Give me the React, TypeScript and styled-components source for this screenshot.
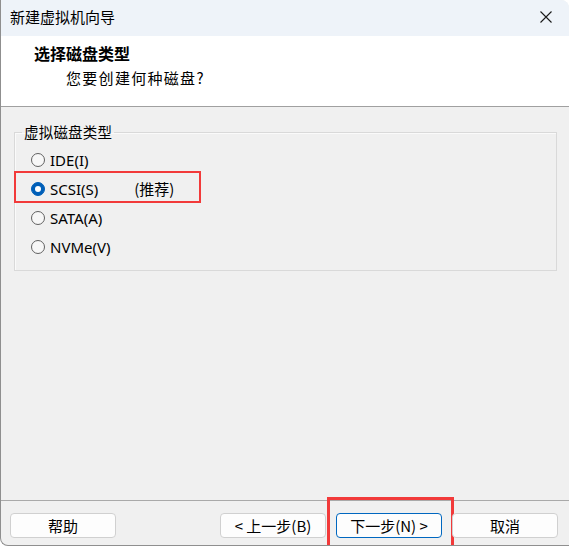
import React, { useState } from "react";
import styled, { createGlobalStyle, css } from "styled-components";

const GlobalStyle = createGlobalStyle`
  html, body {
    margin: 0;
    padding: 0;
    background: #ffffff;
  }
  body {
    font-family: "Noto Sans", "Noto Sans CJK SC", sans-serif;
    color: #000;
    overflow: hidden;
  }
`;

const FONT = `"Noto Sans", "Noto Sans CJK SC", sans-serif`;
const CJK = `"Noto Sans CJK SC", "Noto Sans", sans-serif`;

const Window = styled.div`
  width: 568px;
  height: 545px;
  display: flex;
  flex-direction: column;
  border-left: 1px solid #8f8f8f;
  border-bottom: 1px solid #8f8f8f;
  border-top-right-radius: 8px;
  border-bottom-left-radius: 8px;
  overflow: hidden;
  background: #f0f0f0;
`;

const TitleBar = styled.div`
  height: 36px;
  flex: none;
  display: flex;
  align-items: center;
  justify-content: space-between;
  padding: 0 16px 0 9px;
  background: #eef3f9;
`;

const TitleText = styled.span`
  font-family: ${CJK};
  font-size: 15px;
  line-height: 20px;
  margin-top: -2px;
`;

const CloseButton = styled.button`
  border: none;
  background: transparent;
  padding: 0;
  width: 14px;
  height: 14px;
  display: flex;
  align-items: center;
  justify-content: center;
  margin-top: -2px;
`;

const Header = styled.div`
  height: 71px;
  flex: none;
  background: #ffffff;
  border-bottom: 1px solid #a0a0a0;
  padding: 6px 0 0 33px;
  box-sizing: border-box;
  display: flex;
  flex-direction: column;
`;

const HeaderTitle = styled.div`
  font-family: ${CJK};
  font-weight: 700;
  font-size: 16px;
  line-height: 22px;
`;

const HeaderSub = styled.div`
  font-family: ${CJK};
  font-size: 15px;
  line-height: 22px;
  letter-spacing: 1.3px;
  margin: 3px 0 0 32px;
`;

const Content = styled.div`
  flex: 1;
  padding: 15px 12px 0 13px;
`;

const GroupBox = styled.fieldset`
  margin: 0;
  padding: 3px 0 9px 16px;
  border: 1px solid #d9d9d9;
  box-shadow: inset 1px 1px 0 #fafafa;
  min-width: 0;
`;

const GroupLegend = styled.legend`
  font-family: ${CJK};
  font-size: 14.5px;
  line-height: 20px;
  letter-spacing: 0.2px;
  padding: 0 2px;
  margin-left: -9px;
`;

const OptionRow = styled.label<{ $highlight?: boolean }>`
  position: relative;
  height: 29px;
  display: flex;
  align-items: center;
  gap: 5px;
  font-family: ${FONT};
  font-size: 15px;
  cursor: default;

  ${(p) =>
    p.$highlight &&
    css`
      &::after {
        content: "";
        position: absolute;
        left: -17px;
        top: -3px;
        width: 187px;
        height: 32px;
        box-sizing: border-box;
        border: 2.5px solid #f23a3a;
        pointer-events: none;
      }
    `}
`;

const RadioDot = styled.span<{ $checked?: boolean }>`
  width: 14px;
  height: 14px;
  flex: none;
  box-sizing: border-box;
  border-radius: 50%;
  display: flex;
  align-items: center;
  justify-content: center;
  border: 1px solid ${(p) => (p.$checked ? "#005fb8" : "#616161")};
  background: ${(p) => (p.$checked ? "#005fb8" : "#f7f7f7")};

  &::before {
    content: "";
    width: 6px;
    height: 6px;
    border-radius: 50%;
    background: #ffffff;
    display: ${(p) => (p.$checked ? "block" : "none")};
  }
`;

const OptionText = styled.span`
  line-height: 20px;
`;

const Recommend = styled.span`
  font-family: ${CJK};
  margin-left: 31px;
  line-height: 20px;
`;

const Footer = styled.div`
  height: 45px;
  flex: none;
  border-top: 1px solid #a9a9a9;
  display: flex;
  align-items: flex-start;
  padding: 12px 11px 0 9px;
  box-sizing: border-box;
`;

const ButtonGroup = styled.div`
  margin-left: auto;
  display: flex;
  gap: 10px;
`;

const DialogButton = styled.button<{ $primary?: boolean; $highlight?: boolean }>`
  position: relative;
  width: 106px;
  height: 25px;
  box-sizing: border-box;
  border-radius: 4px;
  border: 1px solid ${(p) => (p.$primary ? "#0067c0" : "#d0d0d0")};
  background: #fdfdfd;
  font-family: ${CJK};
  font-size: 15px;
  line-height: 20px;
  color: #000;
  padding: 0;

  ${(p) =>
    p.$highlight &&
    css`
      &::after {
        content: "";
        position: absolute;
        left: -10px;
        top: -17px;
        right: -13px;
        height: 64px;
        border: 3px solid #f23a3a;
        pointer-events: none;
      }
    `}
`;

const CloseIcon = () => (
  <svg width="12" height="12" viewBox="0 0 12 12">
    <path d="M0.5 0.5 L11.5 11.5 M11.5 0.5 L0.5 11.5" stroke="#1a1a1a" strokeWidth="1.1" />
  </svg>
);

const options = [
  { id: "ide", label: "IDE(I)" },
  { id: "scsi", label: "SCSI(S)", recommend: "(推荐)" },
  { id: "sata", label: "SATA(A)" },
  { id: "nvme", label: "NVMe(V)" },
];

export default function App() {
  const [selected, setSelected] = useState("scsi");

  return (
    <>
      <GlobalStyle />
      <Window>
        <TitleBar>
          <TitleText>新建虚拟机向导</TitleText>
          <CloseButton aria-label="关闭">
            <CloseIcon />
          </CloseButton>
        </TitleBar>

        <Header>
          <HeaderTitle>选择磁盘类型</HeaderTitle>
          <HeaderSub>您要创建何种磁盘?</HeaderSub>
        </Header>

        <Content>
          <GroupBox>
            <GroupLegend>虚拟磁盘类型</GroupLegend>
            {options.map((opt) => (
              <OptionRow
                key={opt.id}
                $highlight={opt.id === "scsi"}
                onClick={() => setSelected(opt.id)}
              >
                <RadioDot $checked={selected === opt.id} />
                <OptionText>{opt.label}</OptionText>
                {opt.recommend && <Recommend>{opt.recommend}</Recommend>}
              </OptionRow>
            ))}
          </GroupBox>
        </Content>

        <Footer>
          <DialogButton>帮助</DialogButton>
          <ButtonGroup>
            <DialogButton>&lt; 上一步(B)</DialogButton>
            <DialogButton $primary $highlight>
              下一步(N) &gt;
            </DialogButton>
            <DialogButton>取消</DialogButton>
          </ButtonGroup>
        </Footer>
      </Window>
    </>
  );
}
